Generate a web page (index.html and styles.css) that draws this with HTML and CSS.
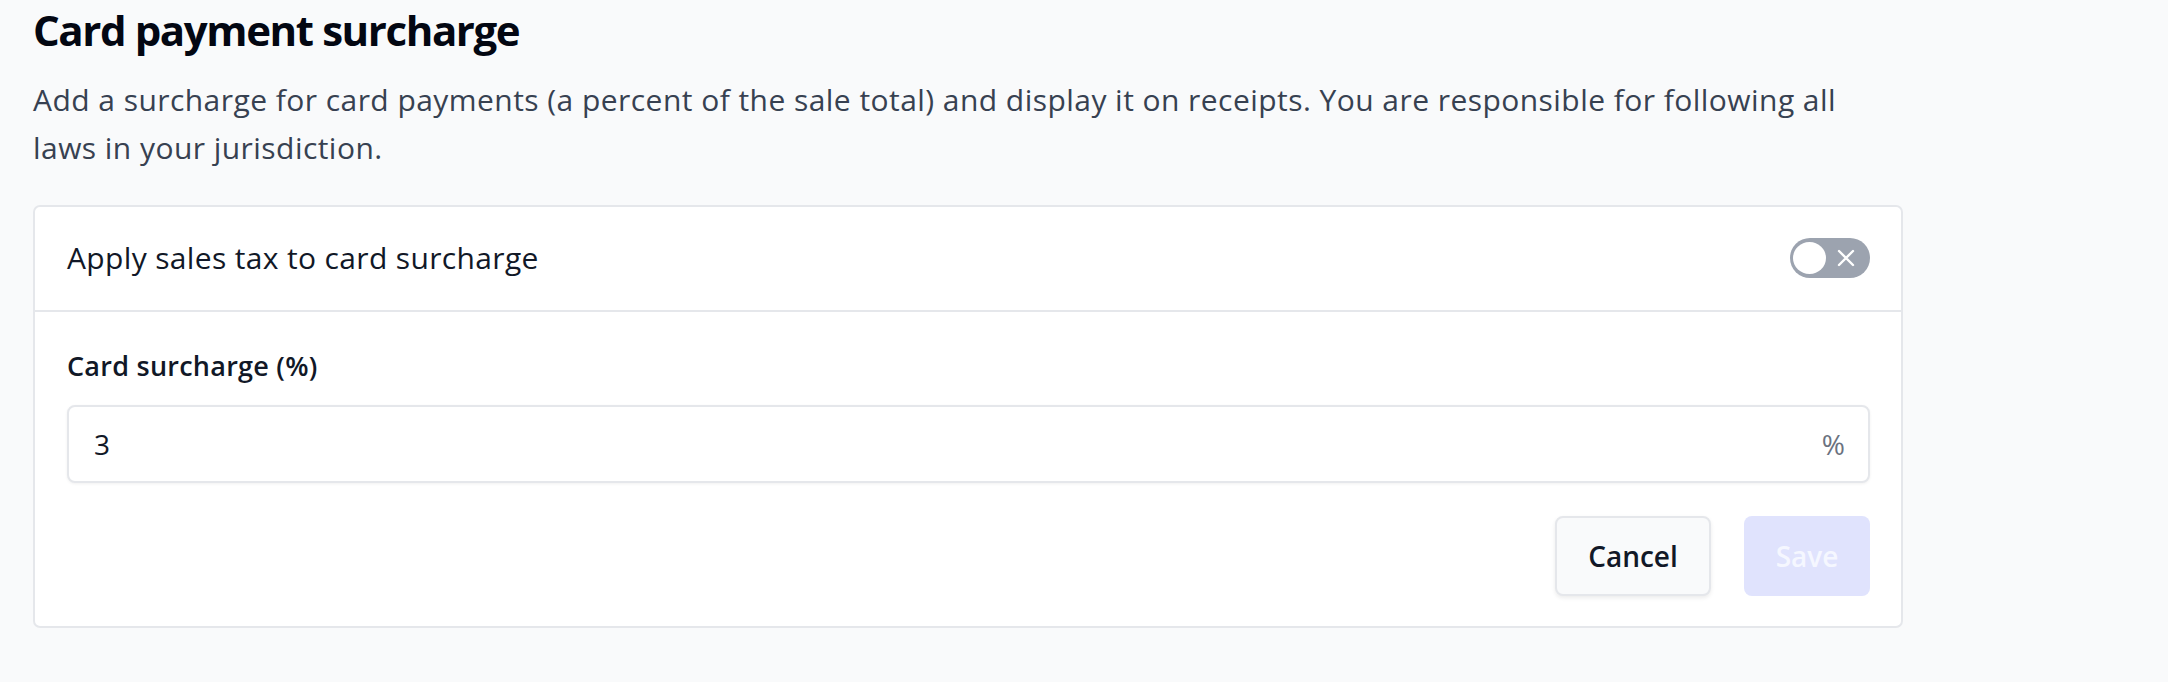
FILE: index.html
```html
<!DOCTYPE html>
<html lang="en">
<head>
    <meta charset="UTF-8">
    <meta name="viewport" content="width=device-width, initial-scale=1.0">
    <title>Card payment surcharge</title>
    <link rel="stylesheet" href="styles.css">
</head>
<body>
    <div class="section">
        <h1 class="title">Card payment surcharge</h1>
        <p class="intro">Add a surcharge for card payments (a percent of the sale total) and display it on receipts. You are responsible for following all laws in your jurisdiction.</p>

        <div class="card">
            <div class="card-row">
                <span class="row-label">Apply sales tax to card surcharge</span>
                <button class="toggle" type="button" aria-pressed="false">
                    <span class="knob"></span>
                    <svg class="toggle-x" width="18" height="18" viewBox="0 0 18 18">
                        <path d="M2 2 L16 16 M16 2 L2 16" stroke="#fff" stroke-width="2.4" stroke-linecap="round" fill="none"/>
                    </svg>
                </button>
            </div>
            <div class="card-body">
                <label class="field-label" for="surcharge">Card surcharge (%)</label>
                <div class="input-wrap">
                    <input id="surcharge" class="field-input" type="text" value="3">
                    <span class="suffix">%</span>
                </div>
                <div class="actions">
                    <button class="btn btn-cancel" type="button">Cancel</button>
                    <button class="btn btn-save" type="button" disabled>Save</button>
                </div>
            </div>
        </div>
    </div>
</body>
</html>
```

FILE: styles.css
```css
body {
    margin: 0;
    background-color: #f9fafb;
    font-family: "Open Sans", "Noto Sans", sans-serif;
    color: #111827;
}

.section {
    width: 1870px;
    padding: 0 33px;
}

.title {
    margin: 0;
    padding-top: 2px;
    font-size: 42px;
    line-height: 56px;
    font-weight: 700;
    letter-spacing: -1.4px;
    color: #030712;
}

.intro {
    max-width: 1850px;
    margin: 18px 0 33px 0;
    font-size: 30px;
    line-height: 48px;
    letter-spacing: 0.45px;
    color: #374151;
}

.card {
    background-color: #fff;
    border: 2px solid #e5e7eb;
    border-radius: 7px;
}

.card-row {
    display: flex;
    align-items: center;
    justify-content: space-between;
    padding: 31px 31px 32px 32px;
    border-bottom: 2px solid #e5e7eb;
}

.row-label {
    font-size: 30px;
    line-height: 40px;
    letter-spacing: 0.35px;
}

.toggle {
    position: relative;
    width: 80px;
    height: 40px;
    border: 0;
    padding: 0;
    border-radius: 20px;
    background-color: #9ca3af;
}

.knob {
    position: absolute;
    left: 3px;
    top: 4px;
    width: 33px;
    height: 32px;
    border-radius: 50%;
    background-color: #fff;
}

.toggle-x {
    position: absolute;
    left: 47px;
    top: 11px;
}

.card-body {
    padding: 35px 31px 30px 32px;
}

.field-label {
    display: block;
    font-size: 27px;
    line-height: 38px;
    font-weight: 600;
    letter-spacing: 0.25px;
    color: #111827;
}

.input-wrap {
    position: relative;
    margin-top: 20px;
}

.field-input {
    display: block;
    box-sizing: border-box;
    width: 100%;
    height: 78px;
    padding: 0 60px 0 25px;
    border: 2px solid #e5e7eb;
    border-radius: 8px;
    box-shadow: 0 1px 3px rgba(0, 0, 0, 0.06);
    font-family: inherit;
    font-size: 28px;
    color: #111827;
    background: #fff;
    outline: none;
}

.suffix {
    position: absolute;
    right: 25px;
    top: 0;
    line-height: 78px;
    font-size: 28px;
    color: #6b7280;
}

.actions {
    display: flex;
    justify-content: flex-end;
    gap: 33px;
    margin-top: 33px;
}

.btn {
    height: 80px;
    border-radius: 8px;
    font-family: inherit;
    font-size: 28px;
    font-weight: 600;
}

.btn-cancel {
    width: 156px;
    background-color: #f9fafb;
    border: 2px solid #e5e7eb;
    box-shadow: 0 2px 4px rgba(0, 0, 0, 0.08);
    color: #111827;
}

.btn-save {
    width: 126px;
    border: 0;
    background-color: #e0e3fd;
    color: #f5f7ff;
}
```
